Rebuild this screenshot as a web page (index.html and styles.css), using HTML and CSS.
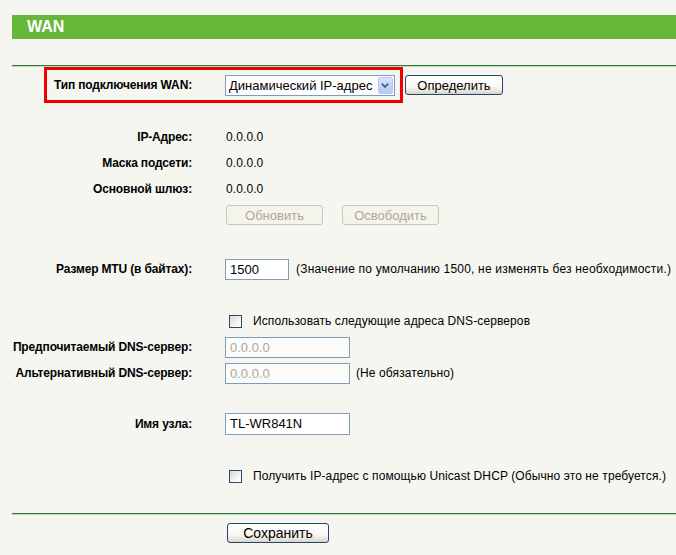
FILE: index.html
```html
<!DOCTYPE html>
<html lang="ru">
<head>
<meta charset="utf-8">
<title>WAN</title>
<link rel="stylesheet" href="styles.css">
</head>
<body>
<div class="page">
  <div class="title">WAN</div>
  <div class="rule rule-top"></div>

  <div class="first-row">
    <div class="highlight">
      <div class="label">Тип подключения WAN:</div>
      <div class="select">
        <span class="select-text">Динамический IP-адрес</span>
        <span class="select-arrow">
          <svg width="15" height="17" viewBox="0 0 15 17">
            <path d="M4 6.5 L7.5 10 L11 6.5" fill="none" stroke="#4d6185" stroke-width="2"/>
          </svg>
        </span>
      </div>
    </div>
    <button class="btn btn-detect">Определить</button>
  </div>

  <div class="gap-a"></div>
  <div class="row"><div class="label">IP-Адрес:</div><div class="value">0.0.0.0</div></div>
  <div class="row"><div class="label">Маска подсети:</div><div class="value">0.0.0.0</div></div>
  <div class="row"><div class="label">Основной шлюз:</div><div class="value">0.0.0.0</div></div>
  <div class="row">
    <div class="label"></div>
    <div class="value btn-group">
      <button class="btn btn-disabled" disabled>Обновить</button>
      <button class="btn btn-disabled" disabled>Освободить</button>
    </div>
  </div>

  <div class="gap-b"></div>
  <div class="row">
    <div class="label">Размер MTU (в байтах):</div>
    <div class="value inline">
      <span class="input input-mtu">1500</span>
      <span class="note note-mtu">(Значение по умолчанию 1500, не изменять без необходимости.)</span>
    </div>
  </div>

  <div class="gap-c"></div>
  <div class="row">
    <div class="label"></div>
    <div class="value inline">
      <span class="checkbox"></span>
      <span class="check-text">Использовать следующие адреса DNS-серверов</span>
    </div>
  </div>
  <div class="row">
    <div class="label">Предпочитаемый DNS-сервер:</div>
    <div class="value inline"><span class="input input-wide input-disabled">0.0.0.0</span></div>
  </div>
  <div class="row">
    <div class="label">Альтернативный DNS-сервер:</div>
    <div class="value inline">
      <span class="input input-wide input-disabled">0.0.0.0</span>
      <span class="note note-opt">(Не обязательно)</span>
    </div>
  </div>

  <div class="gap-d"></div>
  <div class="row">
    <div class="label">Имя узла:</div>
    <div class="value inline"><span class="input input-wide input-host">TL-WR841N</span></div>
  </div>

  <div class="gap-e"></div>
  <div class="row">
    <div class="label"></div>
    <div class="value inline">
      <span class="checkbox"></span>
      <span class="check-text">Получить IP-адрес с помощью Unicast DHCP (Обычно это не требуется.)</span>
    </div>
  </div>

  <div class="rule rule-bottom"></div>
  <div class="save-row">
    <button class="btn btn-save">Сохранить</button>
  </div>
</div>
</body>
</html>
```

FILE: styles.css
```css
html, body {
  margin: 0;
  padding: 0;
  background: #f6f6f1;
}

body {
  font-family: "Liberation Sans", Arial, sans-serif;
  font-size: 12px;
  color: #000;
}

.page {
  width: 676px;
  height: 555px;
  overflow: hidden;
}

.title {
  margin: 15px 0 0 12px;
  height: 24px;
  line-height: 24px;
  background: #66b83a;
  color: #fff;
  font-weight: bold;
  font-size: 16px;
  padding-left: 15px;
}

.rule {
  margin-left: 12px;
  height: 0;
  border-top: 1px solid #2f7a3c;
  border-bottom: 1px solid #b9d8bc;
}

.rule-top {
  margin-top: 26px;
}

.first-row {
  display: flex;
  align-items: center;
  margin-top: 0;
}

.highlight {
  margin-left: 44px;
  border: 3px solid #ee0000;
  height: 30px;
  width: 353px;
  display: flex;
  align-items: center;
}

.highlight .label {
  width: 145px;
  flex: none;
}

.label {
  font-weight: bold;
  text-align: right;
  white-space: nowrap;
  letter-spacing: -0.15px;
}

.select {
  margin-left: 33px;
  width: 170px;
  height: 21px;
  box-sizing: border-box;
  border: 1px solid #7f9db9;
  background: #fff;
  display: flex;
  align-items: center;
  justify-content: space-between;
  font-size: 13px;
}

.select-text {
  padding-left: 3px;
  white-space: nowrap;
}

.select-arrow {
  width: 15px;
  height: 17px;
  margin-right: 1px;
  background: linear-gradient(to bottom, #d7e3fb, #b4c8f5);
  border: 1px solid #b6c9ef;
  box-sizing: border-box;
  border-radius: 2px;
  display: flex;
}

.select-arrow svg {
  margin: -1px 0 0 -1px;
}

.btn {
  font-family: "Liberation Sans", Arial, sans-serif;
  font-size: 13px;
  color: #000;
  height: 20px;
  padding: 0;
  box-sizing: border-box;
  border: 1px solid #25466e;
  border-radius: 3px;
  background: linear-gradient(to bottom, #ffffff 0%, #f7f6f1 60%, #e3e0d6 90%, #d4cfc2 100%);
  line-height: 17px;
}

.btn-detect {
  margin-left: 2px;
  width: 98px;
}

.gap-a { height: 21px; }
.gap-b { height: 28px; }
.gap-c { height: 26px; }
.gap-d { height: 25px; }
.gap-e { height: 26px; }

.row {
  display: grid;
  grid-template-columns: 192px auto;
  column-gap: 33px;
  height: 26px;
  align-items: center;
}

.value {
  white-space: nowrap;
  letter-spacing: 0.1px;
}

.value:not(.inline):not(.btn-group) {
  padding-left: 1px;
}

.inline {
  display: flex;
  align-items: center;
}

.btn-group {
  display: flex;
  gap: 19px;
  padding-left: 1px;
}

.btn-disabled {
  width: 97px;
  height: 20px;
  border-color: #c9c7ba;
  color: #aca899;
  background: #f5f4ea;
}

.input {
  height: 21px;
  box-sizing: border-box;
  border: 1px solid #7f9db9;
  background: #fff;
  font-size: 13px;
  line-height: 19px;
  padding-left: 4px;
  letter-spacing: 0;
}

.input-mtu {
  width: 64px;
}

.input-wide {
  width: 125px;
}

.input-host {
  height: 22px;
  line-height: 20px;
}

.input-disabled {
  color: #aca899;
  background: #fbfbf9;
}

.note {
  font-size: 12px;
}

.note-mtu {
  margin-left: 7px;
  letter-spacing: 0.2px;
}

.note-opt {
  margin-left: 6px;
}

.checkbox {
  width: 13px;
  height: 13px;
  box-sizing: border-box;
  border: 1px solid #2d4a6a;
  background: linear-gradient(135deg, #d9d9d2 0%, #f4f4f0 60%, #ffffff 100%);
  margin-left: 4px;
}

.check-text {
  margin-left: 11px;
}

.rule-bottom {
  margin-top: 24px;
}

.save-row {
  padding-left: 227px;
  margin-top: 8px;
}

.btn-save {
  width: 102px;
  height: 20px;
  font-size: 14px;
}
```
